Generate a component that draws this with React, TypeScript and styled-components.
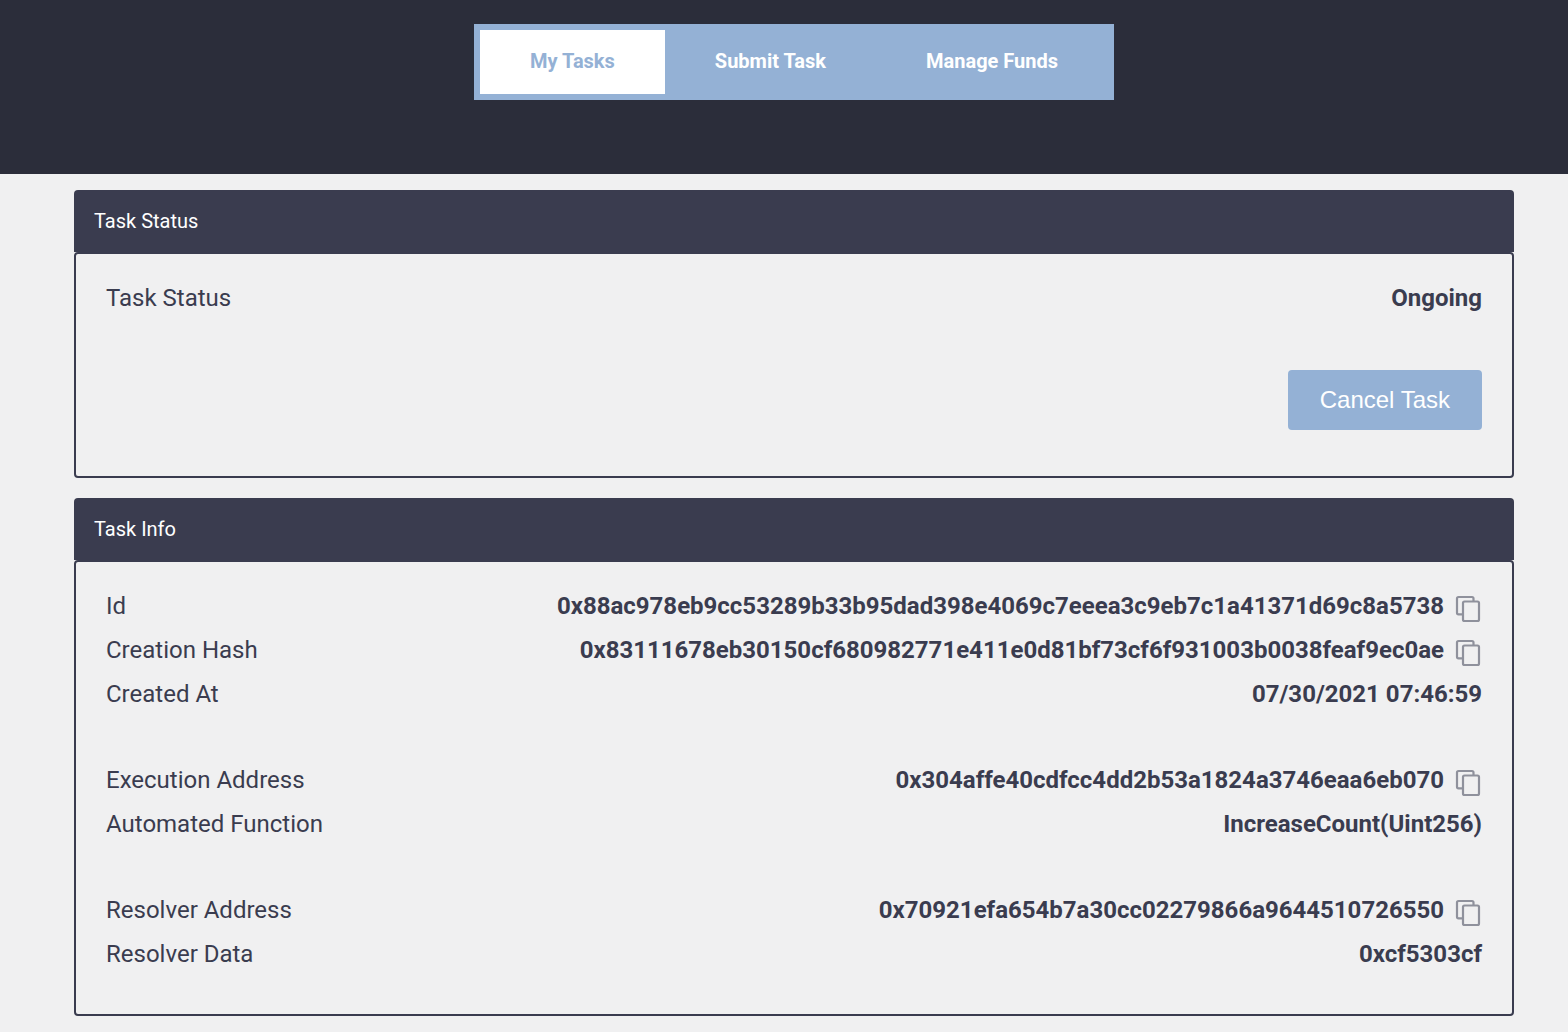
import React from "react";
import styled, { createGlobalStyle } from "styled-components";

const GlobalStyle = createGlobalStyle`
  *, *::before, *::after { box-sizing: border-box; }
  body {
    margin: 0;
    background: #f0f0f1;
    color: #3a3c4f;
    font-family: Roboto, "Liberation Sans", sans-serif;
  }
`;

const Header = styled.header`
  display: flex;
  justify-content: center;
  align-items: flex-start;
  background: #2b2d3a;
  padding: 24px 54px 74px 74px;
`;

const Tabs = styled.nav`
  display: flex;
  padding: 6px;
  background: #94b1d5;
`;

const Tab = styled.button<{ $active?: boolean }>`
  border: 0;
  padding: 19px 50px 21px;
  font: bold 20px/24px Roboto, "Liberation Sans", sans-serif;
  white-space: nowrap;
  cursor: pointer;
  background: ${(p) => (p.$active ? "#ffffff" : "transparent")};
  color: ${(p) => (p.$active ? "#94b1d5" : "#ffffff")};
`;

const Content = styled.main`
  display: flex;
  flex-direction: column;
  gap: 20px;
  padding: 16px 54px 16px 74px;
`;

const CardTitle = styled.h2`
  margin: 0;
  padding: 19px 20px;
  border-radius: 4px 4px 0 0;
  background: #3a3c4f;
  color: #ffffff;
  font-size: 20px;
  font-weight: 400;
  line-height: 24px;
`;

const CardBody = styled.div`
  border: 2px solid #3a3c4f;
  border-radius: 4px;
  padding: 22px 30px 38px;
`;

const Rows = styled.dl`
  display: flex;
  flex-direction: column;
  margin: 0;
  & + & { margin-top: 42px; }
`;

const RowLine = styled.div`
  display: flex;
  justify-content: space-between;
  align-items: center;
  height: 44px;
  font-size: 24px;
  line-height: 28px;
`;

const Label = styled.dt``;

const Value = styled.dd`
  display: flex;
  align-items: center;
  margin: 0;
  font-weight: 700;
`;

const CopyButton = styled.button`
  display: flex;
  margin: 6px 0 0 10px;
  padding: 0;
  border: 0;
  background: none;
  color: #8f919c;
  cursor: pointer;
`;

const Actions = styled.div`
  display: flex;
  justify-content: flex-end;
  padding: 50px 0 8px;
`;

const CancelButton = styled.button`
  height: 60px;
  padding: 0 32px;
  border: 0;
  border-radius: 4px;
  background: #94b1d5;
  color: #ffffff;
  font: 24px/28px "Liberation Sans", Arial, sans-serif;
  cursor: pointer;
`;

const CopyIcon = () => (
  <svg width="28" height="28" viewBox="0 0 28 28" fill="none" stroke="currentColor" strokeWidth="2.2" aria-hidden="true">
    <path d="M9 19.3H4.5A1.5 1.5 0 0 1 3 17.8V3.5A1.5 1.5 0 0 1 4.5 2H18A1.5 1.5 0 0 1 19.5 3.5V6.5" />
    <rect x="9" y="6.5" width="16" height="19.5" rx="1.5" />
  </svg>
);

type RowProps = { label: string; value: string; copyable?: boolean };

const Row = ({ label, value, copyable }: RowProps) => (
  <RowLine>
    <Label>{label}</Label>
    <Value>
      {value}
      {copyable && (
        <CopyButton type="button" aria-label={`Copy ${label}`} onClick={() => navigator.clipboard?.writeText(value)}>
          <CopyIcon />
        </CopyButton>
      )}
    </Value>
  </RowLine>
);

const infoGroups: RowProps[][] = [
  [
    { label: "Id", value: "0x88ac978eb9cc53289b33b95dad398e4069c7eeea3c9eb7c1a41371d69c8a5738", copyable: true },
    { label: "Creation Hash", value: "0x83111678eb30150cf680982771e411e0d81bf73cf6f931003b0038feaf9ec0ae", copyable: true },
    { label: "Created At", value: "07/30/2021 07:46:59" },
  ],
  [
    { label: "Execution Address", value: "0x304affe40cdfcc4dd2b53a1824a3746eaa6eb070", copyable: true },
    { label: "Automated Function", value: "IncreaseCount(Uint256)" },
  ],
  [
    { label: "Resolver Address", value: "0x70921efa654b7a30cc02279866a9644510726550", copyable: true },
    { label: "Resolver Data", value: "0xcf5303cf" },
  ],
];

export default function App() {
  return (
    <>
      <GlobalStyle />
      <Header>
        <Tabs>
          <Tab type="button" $active>My Tasks</Tab>
          <Tab type="button">Submit Task</Tab>
          <Tab type="button">Manage Funds</Tab>
        </Tabs>
      </Header>
      <Content>
        <section>
          <CardTitle>Task Status</CardTitle>
          <CardBody>
            <Rows>
              <Row label="Task Status" value="Ongoing" />
            </Rows>
            <Actions>
              <CancelButton type="button">Cancel Task</CancelButton>
            </Actions>
          </CardBody>
        </section>
        <section>
          <CardTitle>Task Info</CardTitle>
          <CardBody>
            {infoGroups.map((rows) => (
              <Rows key={rows[0].label}>
                {rows.map((row) => (
                  <Row key={row.label} {...row} />
                ))}
              </Rows>
            ))}
          </CardBody>
        </section>
      </Content>
    </>
  );
}
